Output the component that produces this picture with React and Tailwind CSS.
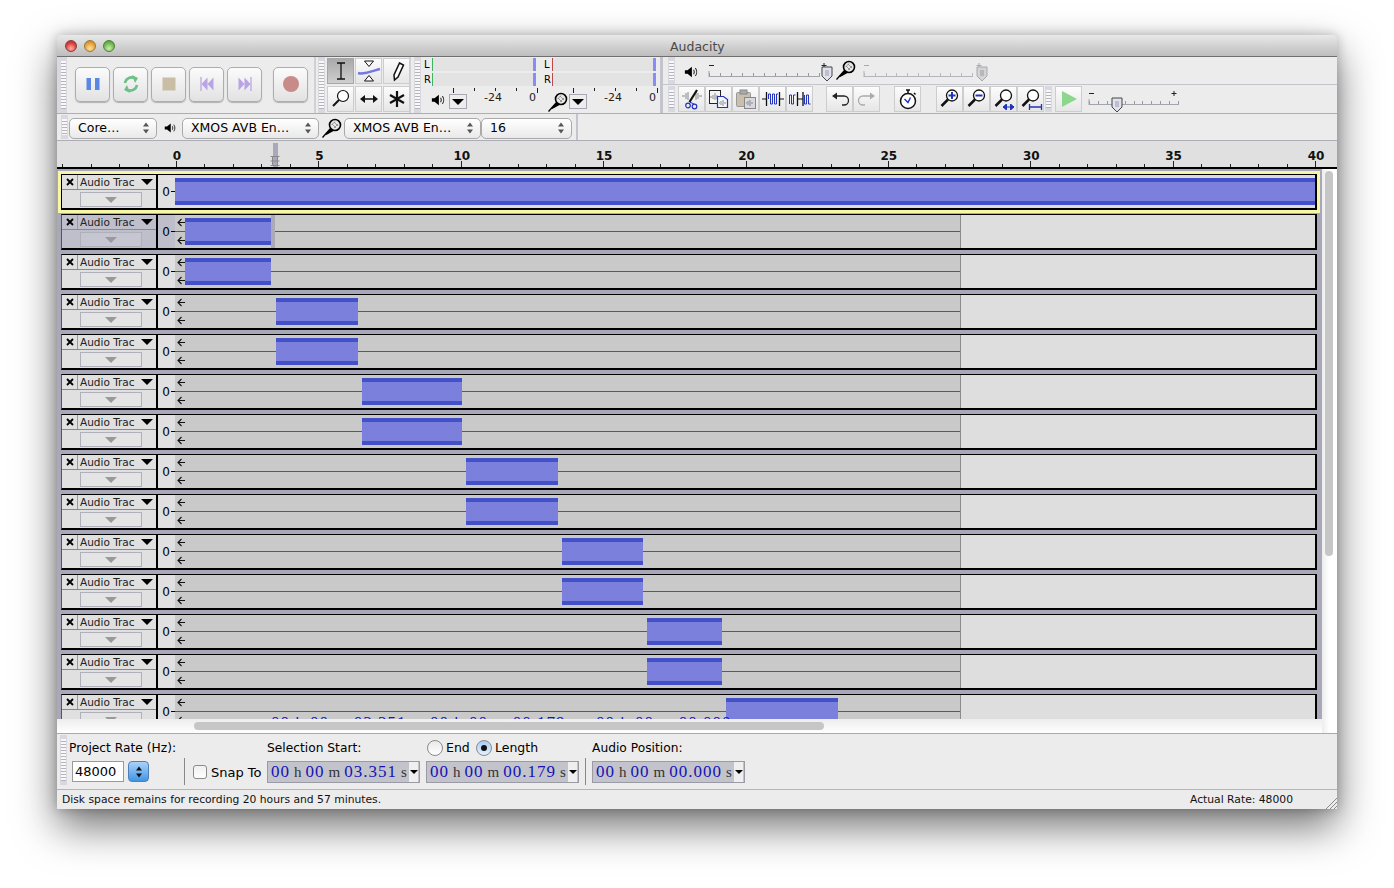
const tracks = [
  { clip: [0, 1141], focused: true },
  { clip: [10, 86], selected: true },
  { clip: [10, 86] },
  { clip: [101, 82] },
  { clip: [101, 82] },
  { clip: [187, 100] },
  { clip: [187, 100] },
  { clip: [291, 92] },
  { clip: [291, 92] },
  { clip: [387, 81] },
  { clip: [387, 81] },
  { clip: [472, 75] },
  { clip: [472, 75] },
  { clip: [551, 112] },
];

const seconds = Array.from({ length: 45 }, (_, i) => i - 4);
const secondWidth = 28.475;

function Grip({ className = "" }) {
  return (
    <div className={"w-[7px] shrink-0 bg-[#d8d8de] px-px py-1 flex flex-col " + className}>
      <div className="flex-1 bg-[repeating-linear-gradient(180deg,#f8f8f8_0px,#f8f8f8_2px,#b4b4be_2px,#b4b4be_3px)]" />
    </div>
  );
}

function TransportButton({ children, className = "" }) {
  return (
    <div className={"w-[35px] h-[35px] rounded-[5px] border border-[#adadad] bg-gradient-to-b from-[#fbfbfb] to-[#e2e2e2] shadow-[0_1px_1px_rgba(0,0,0,0.25)] flex items-center justify-center " + className}>
      <svg viewBox="0 0 24 24" className="w-6 h-6">{children}</svg>
    </div>
  );
}

function ToolButton({ children, active = false, className = "" }) {
  return (
    <div className={"w-[27px] h-[26px] shrink-0 border flex items-center justify-center " + (active ? "border-[#a6a6a6] bg-gradient-to-b from-[#a9a9a9] to-[#cfcfcf] " : "border-[#cdcdcd] bg-gradient-to-b from-[#fcfcfc] to-[#e6e6e6] ") + className}>
      <svg viewBox="0 0 24 24" className="w-[24px] h-[24px]">{children}</svg>
    </div>
  );
}

function Speaker({ className = "w-3.5 h-3.5" }) {
  return (
    <svg viewBox="0 0 16 16" className={className}>
      <path d="M1 6h3l5-4v12l-5-4H1z" fill="#000" />
      <path d="M11 5.500c1 1.500 1 3.500 0 5M13 3.500c2 2.500 2 6.500 0 9" fill="none" stroke="#222" strokeWidth="1.200" />
    </svg>
  );
}

function Mic({ className = "w-5 h-5" }) {
  return (
    <svg viewBox="0 0 20 20" className={className}>
      <path d="M0.500 19.500L9 10" stroke="#000" strokeWidth="1.300" />
      <path d="M4 16.500L9 10.500L11 12.500z" fill="#000" stroke="#000" strokeWidth="1.200" />
      <circle cx="13" cy="7" r="5.500" fill="#e8e8e8" stroke="#000" strokeWidth="1.600" />
      <path d="M10 6l4 4M12 4l4 4M13 3.500l-3.500 3.500M16 6l-4 4" stroke="#777" strokeWidth="0.700" />
    </svg>
  );
}

function Loupe({ children }) {
  return (
    <>
      <circle cx="14" cy="8.500" r="5.500" fill="#fff" stroke="#111" strokeWidth="1.300" />
      <path d="M10 12.500L3.500 19" stroke="#111" strokeWidth="2.500" />
      {children}
    </>
  );
}

function Select({ label, className }) {
  return (
    <div className={"h-[21px] shrink-0 rounded-[5px] border border-[#a9a9a9] bg-gradient-to-b from-[#ffffff] to-[#e9e9e9] flex items-center justify-between pl-2 pr-1.5 text-[12.500px] text-black " + className}>
      <span>{label}</span>
      <svg viewBox="0 0 8 14" className="w-2 h-3.5">
        <path d="M4 1.500L7 5.500H1zM4 12.500L1 8.500H7z" fill="#555" />
      </svg>
    </div>
  );
}

function Meter({ accent, icon, iconPad, iconTop }) {
  return (
    <div className="w-[120px] shrink-0 flex flex-col">
      <div className="flex flex-col h-[30px]">
        {["L", "R"].map((ch) => (
          <div key={ch} className="flex h-[13px] mb-[2px] items-stretch">
            <span className="w-[8px] text-[10px] leading-[13px] text-black">{ch}</span>
            <div className={"w-[104px] border-l bg-[#e3e3e3] flex justify-end " + accent}>
              <div className="w-[3px] bg-[#8a8cf6]" />
            </div>
          </div>
        ))}
      </div>
      <div className="relative h-[25px] flex items-start">
        <div className={"w-[25px] shrink-0 " + iconPad + " " + iconTop}>{icon}</div>
        <div className="w-[18px] h-[15px] mt-[6px] border border-[#a8a8b4] bg-[#ededed] flex items-center justify-center">
          <div className="w-0 h-0 border-x-[6px] border-x-transparent border-t-[6px] border-t-black" />
        </div>
        <svg viewBox="0 0 120 25" className="absolute inset-0 w-[120px] h-[25px]">
          <path d="M29.500 0v5M50.500 0v3M71.500 0v3M92.500 0v3M113.500 0v5" stroke="#222" strokeWidth="1" fill="none" />
        </svg>
        <span className="absolute left-[60px] top-[2px] text-[11px] text-[#222]">-24</span>
        <span className="absolute left-[105px] top-[2px] text-[11px] text-[#222]">0</span>
      </div>
    </div>
  );
}

function VolumeSlider({ width, lineEnd, plus, thumb, thumbTop = 6, dim = false, className = "" }) {
  const line = dim ? "#b4b4bc" : "#a4a4ae";
  const mark = dim ? "#aaa" : "#222";
  return (
    <div className={"relative h-[22px] shrink-0 " + className} style={{ width }}>
      <svg viewBox={`0 0 ${width} 22`} className="absolute inset-0" width={width} height="22">
        <path d={`M1 11v6M1 16.500H${lineEnd}`} stroke={line} fill="none" />
        {Array.from({ length: 11 }, (_, i) => (
          <path key={i} d={`M${Math.round(1 + (i * (lineEnd - 2)) / 10) + 0.5} 13v3`} stroke={dim ? "#bbb" : "#999"} />
        ))}
        <path d="M1 5.500h5" stroke={mark} />
        <path d={`M${plus - 2.500} 5.500h5M${plus} 3v5`} stroke={mark} />
      </svg>
      <svg viewBox="0 0 12 16" className="absolute w-3 h-4" style={{ left: thumb, top: thumbTop }}>
        <path d="M1 1h10v9l-5 5-5-5z" fill={dim ? "#d4d4d4" : "#e2e2ee"} stroke={dim ? "#aaa" : "#444"} />
        <path d="M4 5h4M4 7h4M4 9h4" stroke="#99a" />
      </svg>
    </div>
  );
}

function Track({ clip, focused, selected }) {
  const panel = selected ? "bg-[#bfbfcc]" : "bg-[#e0e0e0]";
  return (
    <div className={"w-[1256px] h-[36px] shrink-0 flex border-t border-b-2 border-r-2 border-black " + (focused ? "ring-[3px] ring-[#f6f6a6] border-l border-l-black" : "border-l border-l-[#555]")}>
      <div className={"w-[96px] shrink-0 flex flex-col border-r-2 border-black " + panel}>
        <div className="h-[15px] flex border-b border-[#8a8a8a]">
          <div className="w-[16px] border-r border-[#9a9a9a] flex items-center justify-center">
            <svg viewBox="0 0 8 8" className="w-2 h-2">
              <path d="M1 1l6 6M7 1l-6 6" stroke="#000" strokeWidth="1.800" />
            </svg>
          </div>
          <div className="flex-1 flex items-center justify-between pl-[2px] pr-[3px]">
            <span className="text-[10.500px] leading-none text-[#222]">Audio Trac</span>
            <div className="w-0 h-0 border-x-[6px] border-x-transparent border-t-[6px] border-t-black" />
          </div>
        </div>
        <div className="pl-[18px] pt-[2px]">
          <div className={"w-[62px] h-[15px] border border-[#b0b0ba] flex items-center justify-center " + (selected ? "bg-[#c6c6d2]" : "bg-[#e4e4e4]")}>
            <div className="w-0 h-0 border-x-[6px] border-x-transparent border-t-[6px] border-t-[#9a9a9a]" />
          </div>
        </div>
      </div>
      <div className={"w-[17px] shrink-0 flex items-center justify-end " + panel}>
        <span className="text-[12px] leading-none text-black mr-px">0</span>
        <div className="w-1 h-px bg-black" />
      </div>
      <div className="relative flex-1 flex overflow-hidden">
        {focused ? (
          <div className="flex-1 bg-[#dcdcdc]" />
        ) : (
          <>
            <div className="w-[786px] bg-[#c9c9c9] border-r border-[#8c8c8c] flex flex-col justify-center">
              <div className="h-px bg-[#4350c8]" />
            </div>
            <div className="flex-1 bg-[#dedede]" />
          </>
        )}
        {selected && <div className="absolute top-0 bottom-0 left-[96px] w-[4px] bg-[#abaab6]" />}
        {!focused && (
          <svg viewBox="0 0 9 33" className="absolute left-[2px] top-0 w-[9px] h-[33px]">
            <path d="M8 7.500H1M4.500 4L1 7.500 4.500 11M8 25.500H1M4.500 22L1 25.500 4.500 29" stroke="#111" strokeWidth="1.100" fill="none" />
          </svg>
        )}
        <div
          className="absolute top-[3px] h-[27px] bg-[#7a80dc] border-y-4 border-[#4350c8]"
          style={{ left: clip[0], width: clip[1] }}
        />
      </div>
    </div>
  );
}

function TimeBox({ values }) {
  const digit = "text-[#1414b4] text-[17px] tracking-[1px]";
  const unit = "text-[#333] text-[15px]";
  return (
    <div className="w-[153px] h-[22px] shrink-0 border border-[#9b9ba6] bg-[#c3c3cc] flex items-center pl-[3px] pr-px font-['Liberation_Serif',serif]">
      <span className={digit}>00</span>
      <span className={unit + " ml-[4px]"}>h</span>
      <span className={digit + " ml-[4px]"}>00</span>
      <span className={unit + " ml-[4px]"}>m</span>
      <span className={digit + " ml-[4px]"}>{values}</span>
      <span className={unit + " ml-[4px]"}>s</span>
      <div className="ml-auto h-full w-[9px] bg-[#efefef] flex items-center justify-center">
        <div className="w-0 h-0 border-x-[4px] border-x-transparent border-t-[4px] border-t-black" />
      </div>
    </div>
  );
}

function Radio({ checked }) {
  return (
    <div className={"w-4 h-4 rounded-full border border-[#8a8a8a] flex items-center justify-center " + (checked ? "bg-gradient-to-b from-[#a9cdf4] to-[#e2f0fd]" : "bg-gradient-to-b from-[#e9e9e9] to-[#ffffff]")}>
      {checked && <div className="w-[6px] h-[6px] rounded-full bg-[#111]" />}
    </div>
  );
}

export default function App() {
  return (
    <div className="w-[1394px] h-[888px] bg-white pt-[35px] pl-[57px] overflow-hidden font-['DejaVu_Sans',sans-serif]">
      <div className="w-[1280px] h-[774px] flex flex-col rounded-t-[5px] bg-[#ececec] shadow-[0_18px_42px_rgba(0,0,0,0.55),0_0_12px_rgba(0,0,0,0.25)]">
        {/* Title bar */}
        <div className="h-[22px] shrink-0 rounded-t-[5px] border-b border-[#6f6f6f] bg-gradient-to-b from-[#e9e9e9] to-[#bdbdbd] flex items-center relative">
          <div className="flex gap-[7px] pl-[8px]">
            <div className="w-3 h-3 rounded-full border border-[#8b3b3b] bg-[radial-gradient(circle_at_50%_75%,#ffb0a8,#dc3c3c_60%,#a83030)]" />
            <div className="w-3 h-3 rounded-full border border-[#9a7a30] bg-[radial-gradient(circle_at_50%_75%,#ffe0a0,#e6a03c_60%,#b07a28)]" />
            <div className="w-3 h-3 rounded-full border border-[#4f7f3c] bg-[radial-gradient(circle_at_50%_75%,#c8f0a8,#70b850_60%,#4f8a38)]" />
          </div>
          <span className="absolute left-[613px] top-[3px] text-[12.500px] text-[#4a4a4a]">Audacity</span>
        </div>

        {/* Toolbars */}
        <div className="h-[57px] shrink-0 flex border-b border-[#adadb6]">
          <div className="w-[259px] shrink-0 flex border-r-2 border-[#d0d0d6]">
            <div className="bg-[#d8d8de] w-[10px] pl-[3px] flex"><Grip /></div>
            <div className="flex items-center pl-[8px] gap-[3px] pb-[2px]">
              <TransportButton>
                <rect x="5.500" y="6" width="4.500" height="12" fill="#5a87e4" />
                <rect x="14" y="6" width="4.500" height="12" fill="#5a87e4" />
              </TransportButton>
              <TransportButton>
                <path d="M6 11a6.500 6.500 0 0 1 9-5" fill="none" stroke="#6cc088" strokeWidth="2.600" />
                <path d="M18 13a6.500 6.500 0 0 1-9 5" fill="none" stroke="#6cc088" strokeWidth="2.600" />
                <path d="M13 3l6 3-3 5zM11 21l-6-3 3-5z" fill="#6cc088" />
              </TransportButton>
              <TransportButton>
                <rect x="5.500" y="5.500" width="13" height="13" fill="#c9bda6" />
              </TransportButton>
              <TransportButton>
                <path d="M5.500 5h1v14h-1z" fill="#a992dc" />
                <path d="M12.500 5.500v13L6.500 12zM18.500 5.500v13l-6-6.500z" fill="#b9a4e4" />
              </TransportButton>
              <TransportButton>
                <path d="M17.500 5h1v14h-1z" fill="#a992dc" />
                <path d="M11.500 5.500v13l6-6.500zM5.500 5.500v13l6-6.500z" fill="#b9a4e4" />
              </TransportButton>
              <TransportButton className="ml-[8px]">
                <circle cx="12" cy="12" r="8" fill="#c98a8a" />
              </TransportButton>
            </div>
          </div>

          <div className="w-[95px] shrink-0 flex border-r-2 border-[#d0d0d6] pl-[2px]">
            <Grip />
            <div className="pl-[2px] pt-px grid grid-cols-[27px_27px_27px] gap-x-px gap-y-[2px] content-start">
              <ToolButton active>
                <path d="M8 4h8M12 4v16M8 20h8" stroke="#111" strokeWidth="1.300" fill="none" />
              </ToolButton>
              <ToolButton>
                <path d="M7.500 2h9l-4.500 5.500zM7.500 22h9L12 16.500z" fill="#fff" stroke="#111" />
                <path d="M1 14c5 1.500 10-.5 22-4" stroke="#7478e0" strokeWidth="2.400" fill="none" />
              </ToolButton>
              <ToolButton>
                <path d="M14.500 4l4 2-5.500 12-3.500 3-.5-5z" fill="#fff" stroke="#111" strokeWidth="1.500" />
              </ToolButton>
              <ToolButton>
                <circle cx="14" cy="9" r="5.500" fill="#fff" stroke="#111" strokeWidth="1.200" />
                <path d="M10 13l-6 6" stroke="#111" strokeWidth="2" />
              </ToolButton>
              <ToolButton>
                <path d="M5 12h14" stroke="#111" strokeWidth="1.500" fill="none" />
                <path d="M3 12l5-4v8zM21 12l-5-4v8z" fill="#111" />
              </ToolButton>
              <ToolButton>
                <path d="M12 4v16M5 8l14 8M19 8L5 16" stroke="#111" strokeWidth="2.200" fill="none" />
              </ToolButton>
            </div>
          </div>

          <div className="w-[252px] shrink-0 flex border-r-[3px] border-[#c4c4cc]">
            <Grip className="ml-[3px]" />
            <div className="flex pl-[3px] pt-[1px]">
              <Meter accent="border-[#3fb35f]" icon={<Speaker />} iconPad="pl-[7px]" iconTop="mt-[5px]" />
              <Meter accent="border-[#c04848]" icon={<Mic />} iconPad="pl-[4px]" iconTop="mt-[4px]" />
            </div>
          </div>

          <div className="flex-1 flex flex-col">
            <div className="h-[28px] flex border-b border-[#c4c4cc] items-start">
              <Grip className="h-[27px] ml-[5px]" />
              <div className="pl-[9px] pt-[8px]"><Speaker /></div>
              <VolumeSlider width={125} lineEnd={112} plus={116} thumb={113} className="ml-[10px] mt-[3px]" />
              <div className="pt-[3px] ml-[3px]"><Mic /></div>
              <VolumeSlider width={125} lineEnd={110} plus={116} thumb={113} dim className="ml-[7px] mt-[3px]" />
            </div>
            <div className="flex items-start pt-px">
              <Grip className="h-[26px] ml-[5px]" />
              <div className="flex gap-0 ml-[3px]">
                <ToolButton>
                  <path d="M2 9h3M19 9h3M6 6v6M8 5v8M16 5v8M18 6v6" stroke="#888" fill="none" />
                  <path d="M17 3L9.500 15" stroke="#111" strokeWidth="2.200" />
                  <path d="M9.500 15l4.500 2" stroke="#2233bb" />
                  <circle cx="8" cy="18.500" r="2.300" fill="none" stroke="#2233bb" strokeWidth="1.200" />
                  <circle cx="14.500" cy="19.500" r="2.300" fill="none" stroke="#2233bb" strokeWidth="1.200" />
                </ToolButton>
                <ToolButton>
                  <rect x="2.500" y="3.500" width="11" height="13" fill="#f4f4f4" stroke="#222" />
                  <path d="M3 10h2M6 8v4M8 6v7M10 8v4" stroke="#888" />
                  <path d="M10.500 9.500h6l4 3v8h-10z" fill="#f4f7ff" stroke="#2233bb" strokeWidth="1.200" />
                  <path d="M12 16h1M14 14v4M16 13v6M18 15v2" stroke="#888" />
                </ToolButton>
                <ToolButton>
                  <rect x="2.500" y="5.500" width="14" height="14" rx="1" fill="#c8c0aa" stroke="#999" />
                  <rect x="6" y="3" width="7" height="4" fill="#aaa" stroke="#888" />
                  <rect x="10.500" y="10.500" width="11" height="11" fill="#d8d8e0" stroke="#888" />
                  <path d="M12 16h1M14 14v4M16 13v6M18 15v2" stroke="#888" />
                </ToolButton>
                <ToolButton>
                  <path d="M1 12h4M19 12h4" stroke="#111" />
                  <path d="M5.500 5v14M18.500 5v14" stroke="#111" strokeWidth="1.300" />
                  <path d="M7.500 12V7h2v10h2V7h2v10h2V7h1.500" stroke="#2233bb" strokeWidth="1" fill="none" />
                </ToolButton>
                <ToolButton className="mr-[13px]">
                  <path d="M9 12h6" stroke="#111" />
                  <path d="M9.500 5v14M15 5v14" stroke="#111" strokeWidth="1.300" />
                  <path d="M1.500 17V8h2v9h2V8h2M16.500 8v9h2V8h2v9h2" stroke="#2233bb" strokeWidth="1" fill="none" />
                </ToolButton>
                <ToolButton>
                  <path d="M8 9h8a4.500 4.500 0 0 1 0 9h-2" stroke="#222" strokeWidth="1.300" fill="none" />
                  <path d="M4 9l5-3.500v7z" fill="#222" />
                </ToolButton>
                <ToolButton className="mr-[14px]">
                  <path d="M16 9H8a4.500 4.500 0 0 0 0 9h2" stroke="#aaa" strokeWidth="1.300" fill="none" />
                  <path d="M20 9l-5-3.500v7z" fill="#aaa" />
                </ToolButton>
                <ToolButton className="mr-[15px]">
                  <circle cx="12" cy="14" r="7.500" fill="#fff" stroke="#111" strokeWidth="1.500" />
                  <path d="M10 3h4M12 3v3M18 6l1.500 1.500" stroke="#111" strokeWidth="1.500" />
                  <path d="M8.500 12l3.500 3.500 2.500-5" stroke="#2233bb" strokeWidth="1.400" fill="none" />
                </ToolButton>
                <ToolButton>
                  <Loupe><path d="M10.500 8.500h7M14 5v7" stroke="#2233bb" strokeWidth="2" /></Loupe>
                </ToolButton>
                <ToolButton>
                  <Loupe><path d="M10.500 8.500h7" stroke="#2233bb" strokeWidth="2" /></Loupe>
                </ToolButton>
                <ToolButton>
                  <Loupe><path d="M11 20h11M14.500 17v6M18.500 17v6M11 20l3-2.500v5zM22 20l-3-2.500v5z" stroke="#2233bb" fill="#2233bb" strokeWidth="1" /></Loupe>
                </ToolButton>
                <ToolButton>
                  <Loupe><path d="M10 20h13M10.500 17v6M22.500 17v6" stroke="#2233bb" strokeWidth="1.300" fill="none" /></Loupe>
                </ToolButton>
              </div>
              <Grip className="h-[26px] ml-px" />
              <ToolButton className="ml-[3px]">
                <path d="M5 4l15 8-15 8z" fill="#8cd68e" />
              </ToolButton>
              <VolumeSlider width={104} lineEnd={91} plus={86} thumb={23} thumbTop={9} className="ml-[6px] mt-[2px]" />
            </div>
          </div>
        </div>

        {/* Device toolbar */}
        <div className="h-[27px] shrink-0 flex items-center pt-[2px] border-b border-[#adadb6]">
          <Grip className="h-[24px] ml-[4px] -mt-[2px]" />
          <Select label="Core…" className="w-[88px] ml-px" />
          <div className="w-[25px] flex justify-center"><Speaker className="w-3 h-3" /></div>
          <Select label="XMOS AVB En…" className="w-[137px]" />
          <div className="w-[25px] flex justify-center"><Mic /></div>
          <Select label="XMOS AVB En…" className="w-[137px]" />
          <Select label="16" className="w-[91px]" />
          <div className="w-[2px] h-[26px] -mt-[2px] ml-[4px] bg-[#c4c4cc]" />
        </div>

        {/* Ruler */}
        <div className="h-[28px] shrink-0 relative bg-[#e0e0e0] border-b-2 border-black">
          <svg viewBox="0 0 1280 26" className="absolute inset-0 w-[1280px] h-[26px]">
            {seconds.map((s) => {
              const x = Math.round(120 + s * secondWidth);
              return <path key={s} d={`M${x - 0.5} ${s % 5 === 0 ? 20 : 23}V26`} stroke="#222" />;
            })}
          </svg>
          {[0, 5, 10, 15, 20, 25, 30, 35, 40].map((n) => (
            <span
              key={n}
              className="absolute top-[7px] w-[30px] -ml-[15px] text-center text-[12px] font-bold leading-[16px] text-[#111]"
              style={{ left: 120 + n * secondWidth }}
            >
              {n}
            </span>
          ))}
          <div className="absolute left-[216px] top-[2px] w-[5px] h-[24px] bg-[#a9a9bb]" />
          <svg viewBox="0 0 10 12" className="absolute left-[213px] top-[14px] w-[10px] h-[12px]">
            <path d="M0.500 1.500h9M0.500 6h9M0.500 10.500h9M2.500 1v10M7.500 1v10" stroke="#8a8a8a" fill="none" />
          </svg>
        </div>

        {/* Tracks */}
        <div className="flex-1 min-h-0 flex">
          <div className="w-[1265px] shrink-0 flex flex-col">
            <div className="relative h-[550px] bg-[#a8a8b9] overflow-hidden pl-[4px] pt-[5px] flex flex-col gap-[4px]">
              {tracks.map((t, i) => (
                <Track key={i} {...t} />
              ))}
              <div className="absolute left-[214px] bottom-0 h-[2px] overflow-hidden flex whitespace-nowrap font-['Liberation_Serif',serif] text-[17px] leading-[12px] tracking-[1px] text-[#1414d0]">
                <span className="w-[159px]">00 h 00 m 03.351</span>
                <span className="w-[166px]">00 h 00 m 00.179</span>
                <span className="w-[150px]">00 h 00 m 00.000</span>
              </div>
            </div>
            <div className="flex-1 bg-gradient-to-b from-[#ededed] to-[#ffffff] flex items-center pl-[137px]">
              <div className="w-[630px] h-[8px] rounded-full bg-[#c6c6c6]" />
            </div>
          </div>
          <div className="flex-1 bg-gradient-to-r from-[#ededed] via-[#ffffff] to-[#ffffff] pl-[3px] pt-[2px]">
            <div className="w-[8px] h-[385px] rounded-full bg-[#c6c6c6]" />
          </div>
        </div>

        {/* Selection bar */}
        <div className="h-[57px] shrink-0 flex border-t border-[#a8a8b9] border-b border-b-[#b4b4bc]">
          <Grip className="h-[50px] ml-[3px] mt-[1px]" />
          <div className="w-[117px] pl-[2px] pt-[5px] shrink-0">
            <div className="text-[12.250px] leading-[18px] whitespace-nowrap text-black">Project Rate (Hz):</div>
            <div className="flex mt-[4px] ml-[3px] gap-[4px] items-center">
              <div className="w-[52px] h-[21px] bg-white border border-[#9a9a9a] text-[13px] leading-[19px] pl-[2px] text-black">48000</div>
              <div className="w-[21px] h-[21px] rounded-[4px] border border-[#4e7fb8] bg-gradient-to-b from-[#a9d2f8] to-[#3d95e6] flex items-center justify-center">
                <svg viewBox="0 0 8 14" className="w-2 h-3.5">
                  <path d="M4 1.500L7 5.500H1zM4 12.500L1 8.500H7z" fill="#111" />
                </svg>
              </div>
            </div>
          </div>
          <div className="w-px h-[27px] mt-[24px] bg-[#888] shrink-0" />
          <div className="flex items-start gap-[4px] w-[82px] pl-[8px] pt-[30px] shrink-0">
            <div className="w-[14px] h-[14px] mt-[1px] rounded-[3px] border border-[#8a8a8a] bg-gradient-to-b from-[#f0f0f0] to-[#ffffff]" />
            <span className="text-[13px] leading-[18px] whitespace-nowrap text-black">Snap To</span>
          </div>
          <div className="w-[159px] shrink-0 pt-[5px]">
            <div className="text-[12.250px] leading-[18px] text-black">Selection Start:</div>
            <div className="mt-[4px]"><TimeBox values="03.351" /></div>
          </div>
          <div className="w-[159px] shrink-0 pt-[5px]">
            <div className="flex items-center h-[18px] pl-px text-[12.500px] text-black">
              <Radio />
              <span className="ml-[3px] w-[30px]">End</span>
              <Radio checked />
              <span className="ml-[3px]">Length</span>
            </div>
            <div className="mt-[4px]"><TimeBox values="00.179" /></div>
          </div>
          <div className="w-px h-[27px] mt-[24px] bg-[#888] shrink-0" />
          <div className="flex-1 pl-[6px] pt-[5px]">
            <div className="text-[12.250px] leading-[18px] text-black">Audio Position:</div>
            <div className="mt-[4px]"><TimeBox values="00.000" /></div>
          </div>
        </div>

        {/* Status bar */}
        <div className="h-[19px] shrink-0 flex items-center justify-between pl-[5px] pt-px text-[10.750px] text-[#111]">
          <span>Disk space remains for recording 20 hours and 57 minutes.</span>
          <div className="flex items-center w-[147px] justify-between h-full">
            <span>Actual Rate: 48000</span>
            <svg viewBox="0 0 12 12" className="w-3 h-3 self-end">
              <path d="M1 12L12 1M5 12l7-7M9 12l3-3" stroke="#8a8a8a" />
            </svg>
          </div>
        </div>
      </div>
    </div>
  );
}
